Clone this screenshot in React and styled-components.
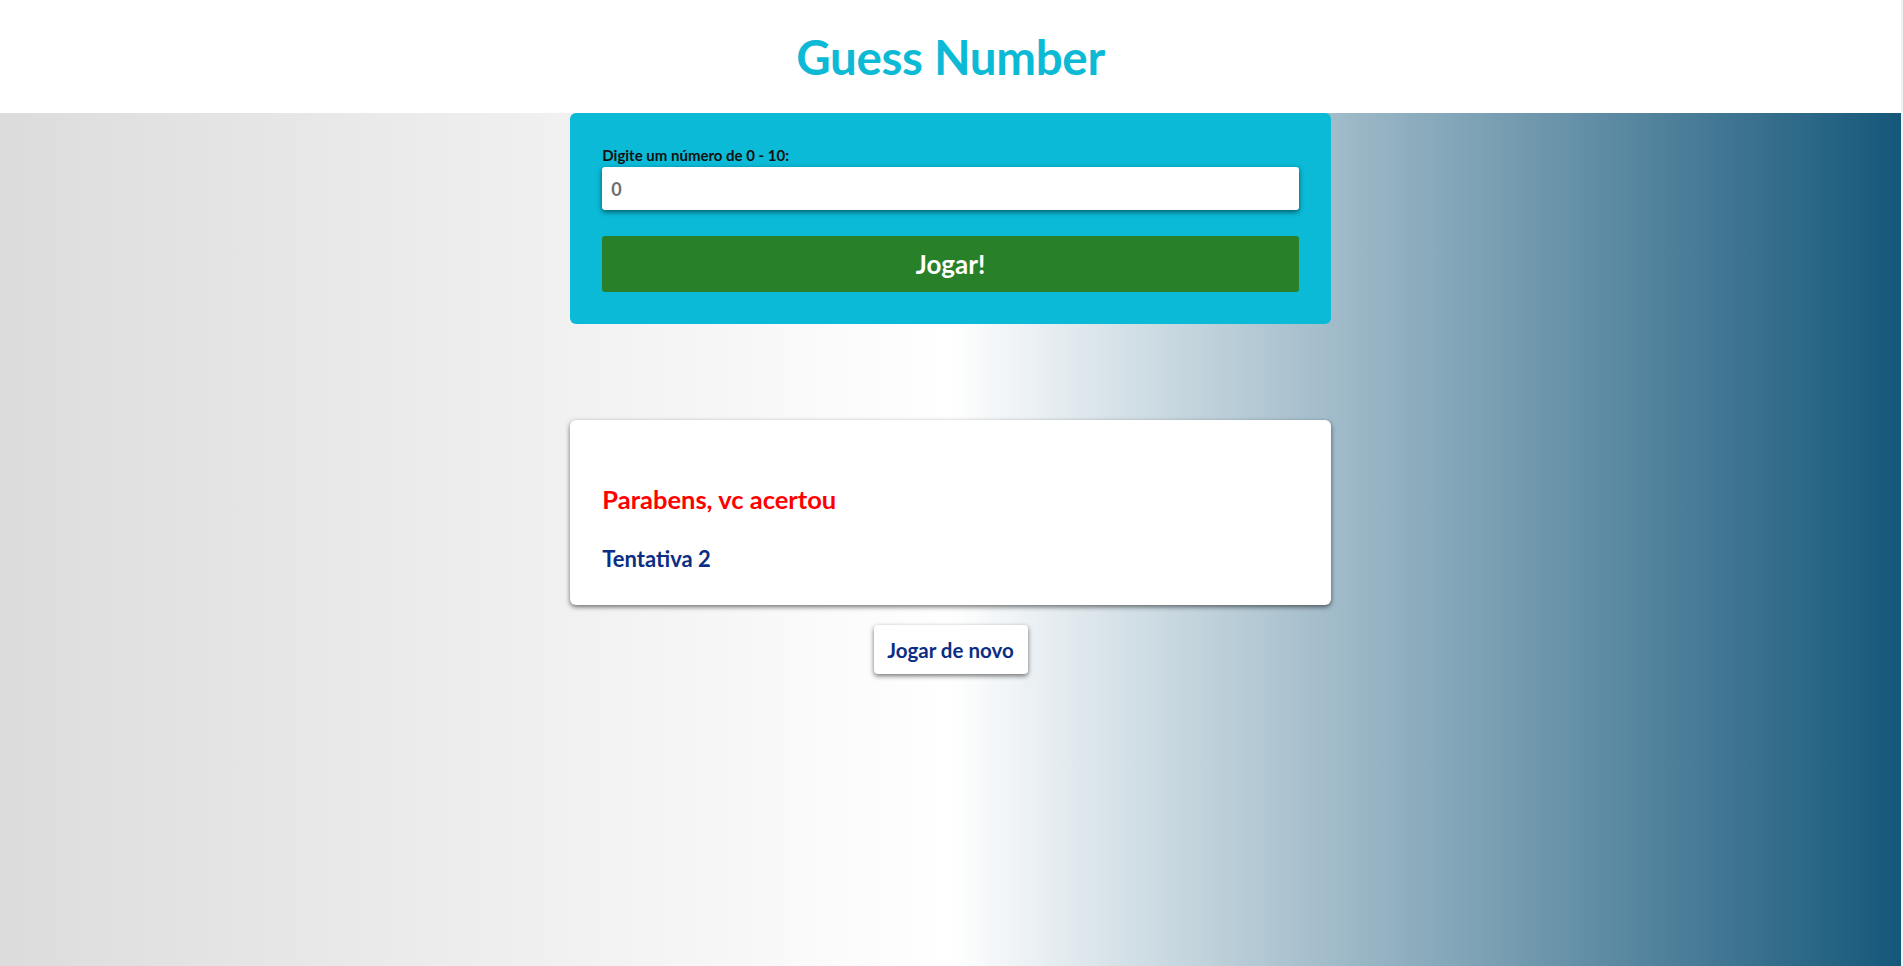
import React from "react";
import styled, { createGlobalStyle } from "styled-components";

const GlobalStyle = createGlobalStyle`
  html { background: #f0f0f0; }
  body {
    margin: 0;
    font-family: "Lato", "Noto Sans", sans-serif;
  }
  * { box-sizing: border-box; }
`;

const Page = styled.div`
  display: flex;
  flex-direction: column;
  min-height: 100vh;
  margin-right: 2px;
`;

const Header = styled.header`
  height: 113px;
  background: #ffffff;
  display: flex;
  align-items: center;
  justify-content: center;
`;

const Title = styled.h1`
  margin: 0;
  font-size: 47.5px;
  font-weight: 700;
  color: #0cbad6;
  letter-spacing: -0.3px;
`;

const Main = styled.main`
  flex: 1;
  display: flex;
  flex-direction: column;
  align-items: center;
  background: linear-gradient(to right, #dcdcdc 0%, #ffffff 50%, #15577a 100%);
`;

const FormCard = styled.form`
  width: 40%;
  background: #0bbad6;
  border-radius: 6px;
  padding: 32px 32px 32px;
  display: flex;
  flex-direction: column;
`;

const Label = styled.label`
  font-size: 15px;
  font-weight: 700;
  color: #111;
  margin-top: 1px;
  margin-bottom: 3px;
`;

const Input = styled.input`
  height: 43px;
  width: 100%;
  border: none;
  border-radius: 3px;
  padding: 0 9px;
  font-family: inherit;
  font-size: 18px;
  font-weight: 700;
  color: #333;
  background: #fff;
  box-shadow: 0 2px 5px rgba(0, 45, 55, 0.7);
  outline: none;
  &::placeholder { color: #6e6e6e; font-weight: 700; }
`;

const PlayButton = styled.button`
  margin-top: 26px;
  height: 56px;
  border: none;
  border-radius: 3px;
  background: #288128;
  color: #fff;
  font-family: inherit;
  font-size: 26px;
  font-weight: 700;
  cursor: pointer;
`;

const ResultCard = styled.section`
  margin-top: 96px;
  width: 40%;
  height: 185px;
  background: #fff;
  border-radius: 6px;
  padding: 0 32px;
  display: flex;
  flex-direction: column;
  box-shadow: 0 2px 5px rgba(0, 0, 0, 0.55);
`;

const Message = styled.h2`
  margin: 64px 0 0;
  font-size: 25.5px;
  font-weight: 700;
  color: #ff0000;
`;

const Attempts = styled.h3`
  margin: 31px 0 0;
  font-size: 22px;
  font-weight: 700;
  color: #0b2e84;
`;

const ReplayButton = styled.button`
  margin-top: 20px;
  width: 154px;
  height: 49px;
  border: none;
  border-radius: 4px;
  background: #fff;
  color: #0b2e84;
  font-family: inherit;
  font-size: 20.5px;
  font-weight: 700;
  box-shadow: 0 2px 5px rgba(0, 0, 0, 0.55);
  cursor: pointer;
`;

export default function App() {
  return (
    <>
      <GlobalStyle />
      <Page>
        <Header>
          <Title>Guess Number</Title>
        </Header>
        <Main>
          <FormCard onSubmit={(e) => e.preventDefault()}>
            <Label htmlFor="guess">Digite um número de 0 - 10:</Label>
            <Input id="guess" type="number" placeholder="0" />
            <PlayButton type="submit">Jogar!</PlayButton>
          </FormCard>
          <ResultCard>
            <Message>Parabens, vc acertou</Message>
            <Attempts>Tentativa 2</Attempts>
          </ResultCard>
          <ReplayButton type="button">Jogar de novo</ReplayButton>
        </Main>
      </Page>
    </>
  );
}
